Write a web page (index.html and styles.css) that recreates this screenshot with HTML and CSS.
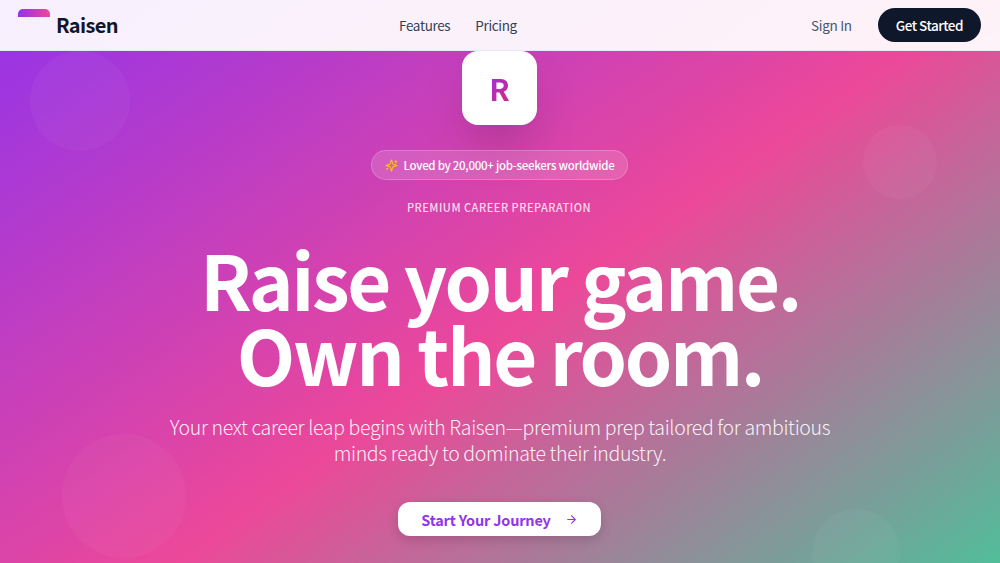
FILE: index.html
```html
<!DOCTYPE html>
<html lang="en">
<head>
    <meta charset="UTF-8">
    <meta name="viewport" content="width=device-width, initial-scale=1.0">
    <title>Raisen</title>
    <link rel="stylesheet" href="styles.css">
</head>
<body>
    <header class="nav">
        <a class="brand" href="#">
            <span class="brand-mark"></span>
            <span class="brand-name">Raisen</span>
        </a>
        <nav class="nav-links">
            <a href="#">Features</a>
            <a href="#">Pricing</a>
        </nav>
        <div class="nav-actions">
            <a class="sign-in" href="#">Sign In</a>
            <a class="get-started" href="#">Get Started</a>
        </div>
    </header>

    <main class="hero">
        <span class="blob blob-a"></span>
        <span class="blob blob-b"></span>
        <span class="blob blob-c"></span>
        <span class="blob blob-d"></span>

        <div class="logo-tile"><span>R</span></div>
        <div class="loved">
            <svg class="sparkle" viewBox="0 0 24 24" fill="none" stroke="#fbbf24" stroke-width="2" stroke-linecap="round" stroke-linejoin="round">
                <path d="M9.9 15.5A2 2 0 0 0 8.5 14.1L2.4 12.5a.5.5 0 0 1 0-1l6.1-1.6A2 2 0 0 0 9.9 8.5l1.6-6.1a.5.5 0 0 1 1 0l1.6 6.1a2 2 0 0 0 1.4 1.4l6.1 1.6a.5.5 0 0 1 0 1l-6.1 1.6a2 2 0 0 0-1.4 1.4l-1.6 6.1a.5.5 0 0 1-1 0z"/>
                <path d="M20 3v4M22 5h-4M4 17v2M5 18H3"/>
            </svg>
            Loved by 20,000+ job-seekers worldwide
        </div>
        <p class="eyebrow">PREMIUM CAREER PREPARATION</p>
        <h1>Raise your game.<br>Own the room.</h1>
        <p class="lead">Your next career leap begins with Raisen—premium prep tailored for ambitious minds ready to dominate their industry.</p>
        <a class="cta" href="#">
            Start Your Journey
            <svg class="arrow" viewBox="0 0 24 24" fill="none" stroke="currentColor" stroke-width="2" stroke-linecap="round" stroke-linejoin="round">
                <path d="M5 12h14M12 5l7 7-7 7"/>
            </svg>
        </a>
    </main>
</body>
</html>
```

FILE: styles.css
```css
* {
    margin: 0;
    padding: 0;
    box-sizing: border-box;
}

html, body {
    height: 100%;
}

body {
    font-family: "Noto Sans CJK JP", "Noto Sans", sans-serif;
    overflow: hidden;
    background: linear-gradient(145deg, #9333ea 0%, #ec4899 50%, #34d399 100%) no-repeat;
    background-size: 100% 670px;
    position: relative;
}

a {
    text-decoration: none;
    color: inherit;
}

.nav {
    height: 51px;
    display: flex;
    align-items: center;
    justify-content: space-between;
    padding: 0 19px 0 18px;
    background: rgba(255, 255, 255, 0.93);
    border-bottom: 1px solid rgba(226, 232, 240, 0.8);
    position: relative;
    z-index: 2;
}

.brand {
    display: flex;
    align-items: flex-start;
    height: 51px;
}

.brand-mark {
    width: 32px;
    height: 8px;
    margin-top: 9px;
    border-radius: 5px 5px 0 0;
    background: linear-gradient(90deg, #9333ea, #ec4899);
}

.brand-name {
    margin: 8px 0 0 6px;
    font-size: 20px;
    line-height: 33px;
    font-weight: 700;
    letter-spacing: -0.65px;
    color: #0f172a;
}

.nav-links {
    display: flex;
    gap: 25px;
    margin-right: 13px;
    font-size: 13.5px;
    letter-spacing: -0.35px;
    color: #334155;
}

.nav-actions {
    display: flex;
    align-items: center;
    gap: 26px;
    font-size: 13.5px;
    letter-spacing: -0.3px;
}

.sign-in {
    color: #475569;
}

.get-started {
    background: #0f172a;
    color: #fff;
    font-weight: 500;
    letter-spacing: -0.5px;
    height: 34px;
    line-height: 34px;
    padding: 0 18px;
    border-radius: 17px;
}

.hero {
    display: flex;
    flex-direction: column;
    align-items: center;
    text-align: center;
    color: #fff;
    position: relative;
}

.blob {
    position: absolute;
    border-radius: 50%;
    background: rgba(255, 255, 255, 0.035);
}

.blob-a { left: 30px; top: 0; width: 100px; height: 100px; }
.blob-b { left: 863px; top: 74px; width: 74px; height: 74px; }
.blob-c { left: 62px; top: 383px; width: 124px; height: 124px; }
.blob-d { left: 812px; top: 458px; width: 88px; height: 88px; }

.logo-tile {
    width: 75px;
    height: 74px;
    margin-right: 1px;
    background: #fff;
    border-radius: 16px;
    box-shadow: 0 25px 50px -12px rgba(0, 0, 0, 0.25);
    display: flex;
    align-items: center;
    justify-content: center;
    font-size: 30px;
    font-weight: 700;
    position: relative;
}

.logo-tile span {
    background: linear-gradient(135deg, #9333ea, #db2777);
    -webkit-background-clip: text;
    background-clip: text;
    color: transparent;
}

.loved {
    margin-top: 25px;
    margin-right: 1px;
    height: 30px;
    padding: 0 13px;
    display: flex;
    align-items: center;
    gap: 6px;
    font-size: 11.5px;
    font-weight: 500;
    letter-spacing: -0.28px;
    border-radius: 15px;
    background: rgba(255, 255, 255, 0.15);
    border: 1px solid rgba(255, 255, 255, 0.2);
    position: relative;
}

.sparkle {
    width: 13px;
    height: 13px;
}

.eyebrow {
    margin-top: 19px;
    margin-right: 2px;
    font-size: 11px;
    font-weight: 500;
    letter-spacing: 0.5px;
    color: rgba(255, 255, 255, 0.8);
    position: relative;
}

h1 {
    margin-top: 26px;
    font-size: 76px;
    line-height: 75px;
    font-weight: 700;
    letter-spacing: -2.4px;
    position: relative;
}

.lead {
    margin-top: 23px;
    width: 672px;
    font-size: 19.5px;
    line-height: 26px;
    font-weight: 300;
    letter-spacing: -0.35px;
    color: rgba(255, 255, 255, 0.92);
    position: relative;
}

.cta {
    margin-top: 36px;
    margin-right: 1px;
    width: 203px;
    height: 34px;
    background: #fff;
    color: #9333ea;
    border-radius: 12px;
    font-size: 14.5px;
    font-weight: 700;
    letter-spacing: -0.2px;
    display: flex;
    align-items: center;
    justify-content: center;
    gap: 14px;
    box-shadow: 0 4px 12px rgba(0, 0, 0, 0.15);
    position: relative;
}

.arrow {
    width: 13px;
    height: 13px;
}
```
